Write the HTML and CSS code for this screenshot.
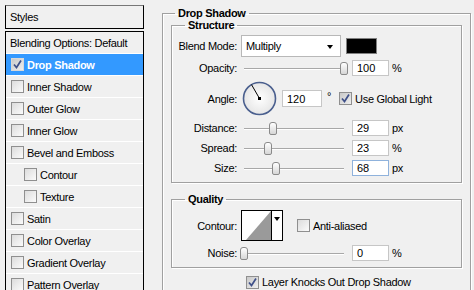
FILE: index.html
```html
<html><head><meta charset="utf-8">
<title>Layer Style - Drop Shadow</title>
<link rel="stylesheet" href="styles.css">
</head><body>
<div class="dialog">
  <aside class="styles-panel">
    <div class="panel-title">Styles</div>
    <ul class="style-list">
      <li class="style-item">Blending Options: Default</li>
      <li class="style-item selected"><span class="cb checked"><svg width="11" height="11" viewBox="0 0 11 11"><path d="M2 5.5 L4.5 8.5 L9 1.5" stroke="#3f5089" stroke-width="1.7" fill="none"/></svg></span>Drop Shadow</li>
      <li class="style-item"><span class="cb"></span>Inner Shadow</li>
      <li class="style-item"><span class="cb"></span>Outer Glow</li>
      <li class="style-item"><span class="cb"></span>Inner Glow</li>
      <li class="style-item"><span class="cb"></span>Bevel and Emboss</li>
      <li class="style-item sub"><span class="cb"></span>Contour</li>
      <li class="style-item sub"><span class="cb"></span>Texture</li>
      <li class="style-item"><span class="cb"></span>Satin</li>
      <li class="style-item"><span class="cb"></span>Color Overlay</li>
      <li class="style-item"><span class="cb"></span>Gradient Overlay</li>
      <li class="style-item"><span class="cb"></span>Pattern Overlay</li>
    </ul>
  </aside>

  <fieldset class="group outer">
    <legend>Drop Shadow</legend>

    <fieldset class="group section structure">
      <legend>Structure</legend>
      <div class="row row-blend">
        <span class="lbl">Blend Mode:</span>
        <div class="select">Multiply<span class="arrow"></span></div>
        <span class="swatch"></span>
      </div>
      <div class="row">
        <span class="lbl">Opacity:</span>
        <div class="slider"><span class="thumb" style="left:100%"></span></div>
        <input class="num" type="text" value="100" readonly>
        <span class="unit">%</span>
      </div>
      <div class="row row-angle">
        <span class="lbl">Angle:</span>
        <svg class="dial" width="35" height="35" viewBox="0 0 35 35">
          <defs>
            <radialGradient id="dialFill" cx="50%" cy="50%" r="50%">
              <stop offset="0" stop-color="#ffffff"/>
              <stop offset="1" stop-color="#e6e6e6"/>
            </radialGradient>
          </defs>
          <circle cx="17.5" cy="17.5" r="16" fill="url(#dialFill)" stroke="#4a5f8e" stroke-width="1.6"/>
          <line x1="17.5" y1="17.5" x2="9.5" y2="3.6" stroke="#000" stroke-width="1"/>
          <rect x="16" y="16" width="3" height="3" fill="#000"/>
        </svg>
        <input class="num wide" type="text" value="120" readonly>
        <span class="deg">°</span>
        <span class="cb checked"><svg width="11" height="11" viewBox="0 0 11 11"><path d="M2 5.5 L4.5 8.5 L9 1.5" stroke="#3f5089" stroke-width="1.7" fill="none"/></svg></span>
        <span class="cb-text">Use Global Light</span>
      </div>
      <div class="row row-slim">
        <span class="lbl">Distance:</span>
        <div class="slider"><span class="thumb" style="left:29%"></span></div>
        <input class="num" type="text" value="29" readonly>
        <span class="unit">px</span>
      </div>
      <div class="row row-slim">
        <span class="lbl">Spread:</span>
        <div class="slider"><span class="thumb" style="left:24%"></span></div>
        <input class="num" type="text" value="23" readonly>
        <span class="unit">%</span>
      </div>
      <div class="row row-slim">
        <span class="lbl">Size:</span>
        <div class="slider"><span class="thumb" style="left:32%"></span></div>
        <input class="num focused" type="text" value="68" readonly>
        <span class="unit">px</span>
      </div>
    </fieldset>

    <fieldset class="group section quality">
      <legend>Quality</legend>
      <div class="row row-contour">
        <span class="lbl">Contour:</span>
        <div class="contour">
          <svg class="contour-preview" width="29" height="29" viewBox="0 0 29 29">
            <rect width="29" height="29" fill="#fff"/>
            <polygon points="4,29 29,0 29,29" fill="#9a9a9a"/>
          </svg>
          <span class="contour-drop"><span class="arrow"></span></span>
        </div>
        <span class="cb aa"></span>
        <span class="cb-text">Anti-aliased</span>
      </div>
      <div class="row row-noise">
        <span class="lbl">Noise:</span>
        <div class="slider"><span class="thumb" style="left:0%"></span></div>
        <input class="num" type="text" value="0" readonly>
        <span class="unit">%</span>
      </div>
    </fieldset>

    <div class="knockout">
      <span class="cb checked"><svg width="11" height="11" viewBox="0 0 11 11"><path d="M2 5.5 L4.5 8.5 L9 1.5" stroke="#3f5089" stroke-width="1.7" fill="none"/></svg></span>
      <span class="cb-text">Layer Knocks Out Drop Shadow</span>
    </div>
  </fieldset>
</div>
</body></html>
```

FILE: styles.css
```css
body {
  margin: 0;
  background-color: #f0f0f0;
  font-family: "Liberation Sans", Arial, sans-serif;
  font-size: 11px;
  letter-spacing: -0.3px;
  color: #000;
  overflow: hidden;
}
.dialog {
  display: flex;
  align-items: flex-start;
  padding: 5px 0 0 5px;
  height: 285px;
  box-sizing: border-box;
  height: 290px;
}

/* left list of styles */
.styles-panel {
  width: 139px;
  display: flex;
  flex-direction: column;
  gap: 2px;
  height: 100%;
}
.panel-title {
  height: 22px;
  line-height: 22px;
  padding-left: 4px;
  border: 1px solid #000;
  border-top-color: #777;
}
.style-list {
  flex: 1;
  list-style: none;
  margin: 0;
  padding: 0;
  border: 1px solid #000;
  border-bottom: none;
  overflow: hidden;
}
.style-item {
  display: flex;
  align-items: center;
  height: 21px;
  padding-left: 4px;
  border-bottom: 1px solid #fff;
}
.style-item .cb {
  margin: 0 3px 0 1px;
}
.style-item.sub {
  padding-left: 17px;
}
.style-item.selected {
  background-color: #3399ff;
  color: #fff;
  font-weight: bold;
}
.style-item.selected .cb {
  border-color: #d8d8d8;
}

/* checkboxes */
.cb {
  display: inline-flex;
  align-items: center;
  justify-content: center;
  width: 13px;
  height: 13px;
  box-sizing: border-box;
  border: 1px solid #8f8f8f;
  background: linear-gradient(135deg, #dcdcdc, #fbfbfb);
  flex: none;
}
.cb.checked {
  background: linear-gradient(135deg, #c9c9c9, #eeeeee);
}
.cb-text {
  margin-left: 3px;
}

/* group boxes */
.group {
  margin: 0;
  padding: 0;
  border: 1px solid #a0a0a0;
  box-shadow: inset 1px 1px 0 #fff, 1px 1px 0 #fff;
  min-width: 0;
}
.group legend {
  font-weight: bold;
  line-height: 12px;
  padding: 0 3px;
}
.outer {
  width: 307px;
  height: 283px;
  margin: 2px 0 0 18px;
  border-bottom: none;
}
.outer > legend {
  margin-left: 12px;
}
.section {
  margin: 0 8px;
}
.section > legend {
  margin-left: 13px;
}
.structure {
  padding: 4px 0 4px;
}
.quality {
  margin-top: 10px;
  padding: 5px 0 5px;
}

/* rows inside the groups */
.row {
  display: flex;
  align-items: center;
  height: 22px;
}
.lbl {
  width: 65px;
  text-align: right;
  margin-right: 4px;
  flex: none;
}
.row-angle {
  height: 39px;
}
.row-slim {
  height: 20px;
}
.row-contour {
  height: 31px;
}
.row-noise {
  height: 18px;
  margin-top: 3px;
}

.select {
  position: relative;
  width: 100px;
  height: 22px;
  box-sizing: border-box;
  border: 1px solid #b8b8b8;
  background-color: #fff;
  padding-left: 4px;
  line-height: 20px;
}
.arrow {
  width: 0;
  height: 0;
  border-left: 3px solid transparent;
  border-right: 3px solid transparent;
  border-top: 4px solid #000;
}
.select .arrow {
  position: absolute;
  right: 7px;
  top: 9px;
}
.swatch {
  width: 31px;
  height: 16px;
  margin-left: 5px;
  box-sizing: border-box;
  border: 1px solid #808080;
  background-color: #000;
}

.slider {
  position: relative;
  width: 100px;
  height: 13px;
  margin-left: 3px;
}
.slider::before {
  content: "";
  position: absolute;
  left: 0;
  right: 0;
  top: 6px;
  height: 1px;
  background-color: #a8a8a8;
  border-bottom: 1px solid #fff;
}
.thumb {
  position: absolute;
  top: 0;
  width: 8px;
  height: 13px;
  margin-left: -4px;
  box-sizing: border-box;
  border: 1px solid #8a8a8a;
  border-radius: 3px 3px 2px 2px;
  background: linear-gradient(#ffffff, #d6d6d6);
}

.num {
  width: 37px;
  height: 16px;
  margin: 0 0 0 8px;
  padding: 0 0 0 4px;
  box-sizing: border-box;
  border: 1px solid #c6c6c6;
  background-color: #fff;
  font: inherit;
  color: #000;
  outline: none;
}
.num.wide {
  width: 40px;
  height: 17px;
  margin-left: 5px;
}
.num.focused {
  border-color: #8fb2dc;
}
.unit {
  margin-left: 3px;
}
.deg {
  margin: 0 8px 0 5px;
  align-self: flex-start;
  padding-top: 11px;
}

.dial {
  margin-left: 1px;
  flex: none;
}

.contour {
  display: flex;
  height: 31px;
  box-sizing: border-box;
  border: 1px solid #000;
}
.contour-preview {
  display: block;
}
.contour-drop {
  display: flex;
  justify-content: center;
  padding-top: 6px;
  width: 10px;
  border-left: 1px solid #000;
  background-color: #fff;
}
.cb.aa {
  margin-left: 14px;
}

.knockout {
  display: flex;
  align-items: center;
  height: 18px;
  margin: 5px 0 0 83px;
}
```
